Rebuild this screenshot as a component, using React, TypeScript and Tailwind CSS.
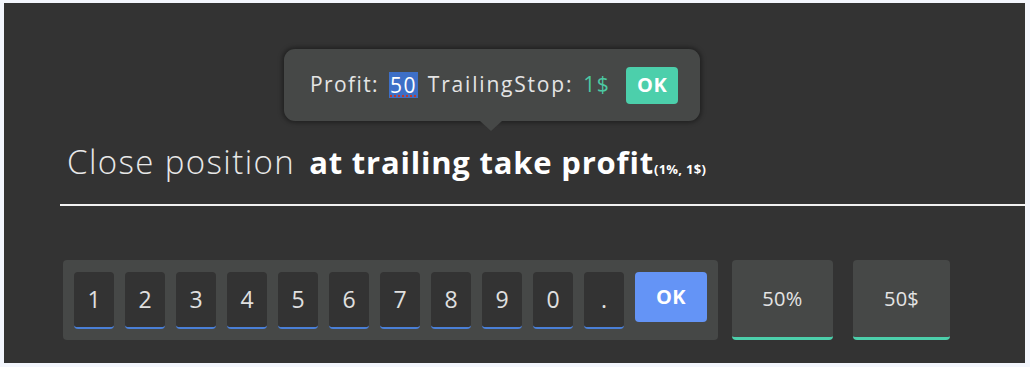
import React from "react";

const keys = ["1", "2", "3", "4", "5", "6", "7", "8", "9", "0", "."];

const font = { fontFamily: '"Open Sans", "Liberation Sans", sans-serif' };

export default function App() {
  return (
    <div className="w-[1030px] h-[367px] bg-[#f3f6fd] pt-[3px] pl-[4px]" style={font}>
      <div className="relative w-[1021px] h-[360px] bg-[#333333] overflow-hidden">
        {/* Tooltip */}
        <div className="absolute left-[280px] top-[46px] w-[416px] h-[72px] rounded-[11px] bg-[#464847] shadow-[0_0_4px_2px_rgba(0,0,0,0.35)] flex items-center pl-[26px] text-[21px] tracking-[1.4px] text-[#e4e4e4]">
          <span>Profit:</span>
          <span className="ml-[10px] bg-[#3d6fc7] text-white leading-[26px] px-[1px] underline decoration-dotted decoration-[#c0392b]">50</span>
          <span className="ml-[10px] tracking-[1.8px]">TrailingStop:</span>
          <span className="ml-[10px] text-[#4cc9a3]">1$</span>
          <span className="ml-[16px] w-[52px] h-[37px] rounded-[4px] bg-[#4ccfab] text-white font-bold text-[20px] tracking-[0.5px] flex items-center justify-center">OK</span>
          <div className="absolute left-[196px] bottom-[-10px] w-0 h-0 border-l-[11px] border-r-[11px] border-t-[10px] border-l-transparent border-r-transparent border-t-[#464847]" />
        </div>

        {/* Heading */}
        <div className="pt-[134px] pl-[63px] flex items-baseline h-[186px] text-white">
          <span className="text-[33px] font-light tracking-[1.4px] text-[#e8e8e8]">Close position</span>
          <span className="ml-[14px] text-[31px] font-bold tracking-[0.8px]">at trailing take profit</span>
          <span className="text-[13px] font-bold tracking-[0.3px]">(1%, 1$)</span>
        </div>
        <div className="ml-[56px] mt-[15px] h-[2px] bg-[#f2f2f2]" />

        {/* Keypad */}
        <div className="ml-[59px] mt-[54px] flex items-start">
          <div className="flex gap-[11px] bg-[#464847] rounded-[4px] pt-[12px] pb-[11px] px-[11px]">
            {keys.map((k) => (
              <div
                key={k}
                className="w-[40px] h-[57px] rounded-[4px] bg-[#333333] border-b-2 border-[#4a7fd6] flex items-center justify-center text-[23px] text-[#e0e0e0]"
              >
                {k}
              </div>
            ))}
            <div className="w-[72px] h-[50px] rounded-[4px] bg-[#6494f6] flex items-center justify-center text-white font-bold text-[20px] tracking-[0.5px]">
              OK
            </div>
          </div>
          <div className="ml-[14px] w-[101px] h-[80px] rounded-[4px] bg-[#464847] border-b-[3px] border-[#4ccfab] flex items-center justify-center text-[20px] tracking-[0.3px] text-[#e4e4e4]">
            50%
          </div>
          <div className="ml-[20px] w-[97px] h-[80px] rounded-[4px] bg-[#464847] border-b-[3px] border-[#4ccfab] flex items-center justify-center text-[20px] tracking-[0.3px] text-[#e4e4e4]">
            50$
          </div>
        </div>
      </div>
    </div>
  );
}
